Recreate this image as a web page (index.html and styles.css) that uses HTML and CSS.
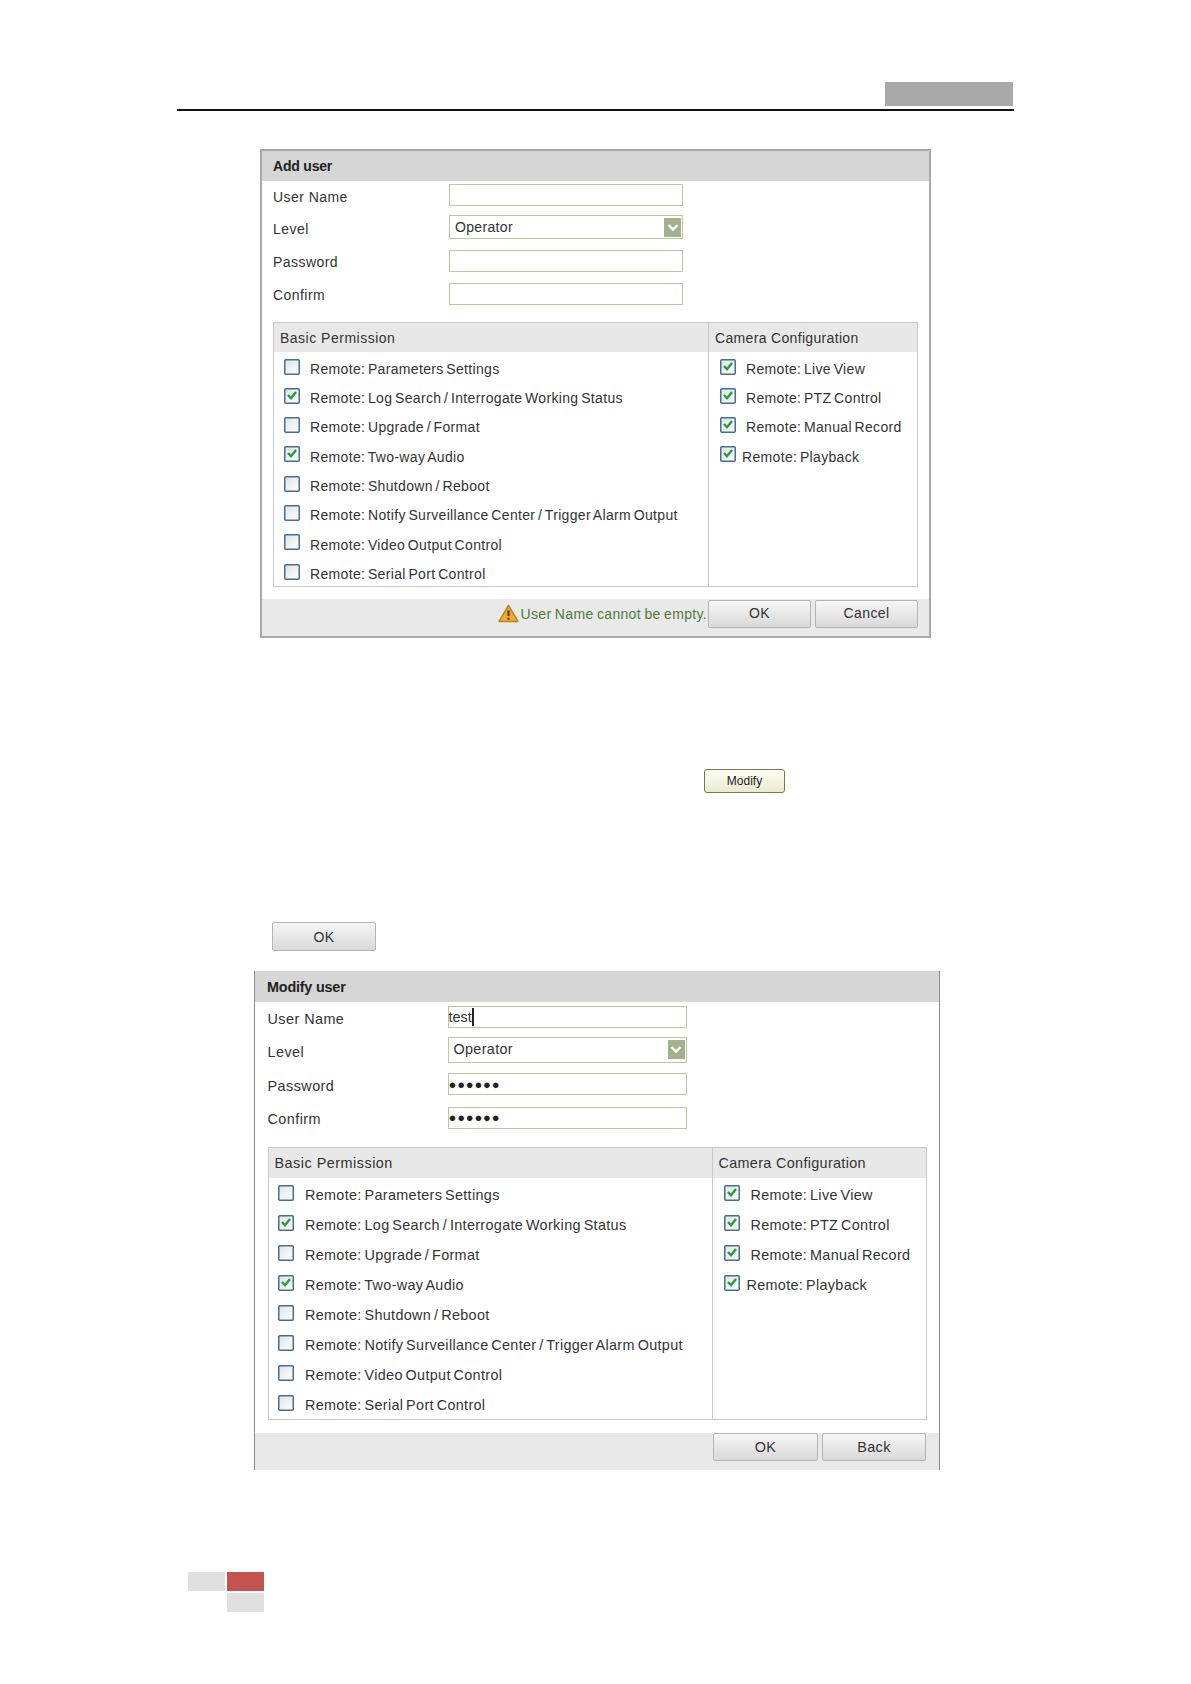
FILE: index.html
```html
<!DOCTYPE html>
<html lang="en">
<head>
<meta charset="utf-8">
<title>Add and modify user</title>
<link rel="stylesheet" href="styles.css">
</head>
<body>
<svg class="defs" width="0" height="0" aria-hidden="true">
  <defs>
    <linearGradient id="boxfill" x1="0" y1="0" x2="1" y2="1">
      <stop offset="0" stop-color="#dfe3e6"/>
      <stop offset="1" stop-color="#ffffff"/>
    </linearGradient>
    <symbol id="cb-off" viewBox="0 0 16 16">
      <rect x="0.75" y="0.75" width="14.5" height="14.5" rx="1" fill="url(#boxfill)" stroke="#44708f" stroke-width="1.5"/>
    </symbol>
    <symbol id="cb-on" viewBox="0 0 16 16">
      <rect x="0.75" y="0.75" width="14.5" height="14.5" rx="1" fill="url(#boxfill)" stroke="#44708f" stroke-width="1.5"/>
      <path d="M4 7 L7 10.2 L12 4" fill="none" stroke="#22a033" stroke-width="2.4"/>
    </symbol>
  </defs>
</svg>

<div class="page">
  <header class="page-head">
    <div class="head-tab"></div>
    <div class="head-rule"></div>
  </header>

  <section class="dialog dialog-add">
    <h2 class="dialog-title">Add user</h2>
    <div class="form">
      <div class="form-row"><span class="form-label">User Name</span><div class="field"></div></div>
      <div class="form-row"><span class="form-label">Level</span><div class="field field-select"><span>Operator</span><span class="select-arrow"><svg viewBox="0 0 16 16" width="16" height="16"><path d="M3.5 6 L8 10.5 L12.5 6" fill="none" stroke="#fff" stroke-width="2.4"/></svg></span></div></div>
      <div class="form-row"><span class="form-label">Password</span><div class="field"></div></div>
      <div class="form-row"><span class="form-label">Confirm</span><div class="field"></div></div>
    </div>
    <div class="perm">
      <div class="perm-col perm-basic">
        <div class="perm-head">Basic Permission</div>
        <ul class="perm-list">
          <li><svg class="cb"><use href="#cb-off"/></svg><span>Remote: Parameters Settings</span></li>
          <li><svg class="cb"><use href="#cb-on"/></svg><span>Remote: Log Search / Interrogate Working Status</span></li>
          <li><svg class="cb"><use href="#cb-off"/></svg><span>Remote: Upgrade / Format</span></li>
          <li><svg class="cb"><use href="#cb-on"/></svg><span>Remote: Two-way Audio</span></li>
          <li><svg class="cb"><use href="#cb-off"/></svg><span>Remote: Shutdown / Reboot</span></li>
          <li><svg class="cb"><use href="#cb-off"/></svg><span>Remote: Notify Surveillance Center / Trigger Alarm Output</span></li>
          <li><svg class="cb"><use href="#cb-off"/></svg><span>Remote: Video Output Control</span></li>
          <li><svg class="cb"><use href="#cb-off"/></svg><span>Remote: Serial Port Control</span></li>
        </ul>
      </div>
      <div class="perm-col perm-camera">
        <div class="perm-head">Camera Configuration</div>
        <ul class="perm-list">
          <li><svg class="cb"><use href="#cb-on"/></svg><span>Remote: Live View</span></li>
          <li><svg class="cb"><use href="#cb-on"/></svg><span>Remote: PTZ Control</span></li>
          <li><svg class="cb"><use href="#cb-on"/></svg><span>Remote: Manual Record</span></li>
          <li class="tight"><svg class="cb"><use href="#cb-on"/></svg><span>Remote: Playback</span></li>
        </ul>
      </div>
    </div>
    <div class="dialog-foot">
      <div class="foot-msg">
        <svg class="warn" viewBox="0 0 20 18" width="21" height="19"><path d="M10 1.2 L19 16.6 H1 Z" fill="#f2ab2c" stroke="#b98420" stroke-width="1.4" stroke-linejoin="round"/><path d="M10 6 V11.5" stroke="#5a3c08" stroke-width="2"/><path d="M10 13 V15" stroke="#5a3c08" stroke-width="2"/></svg>
        <span>User Name cannot be empty.</span>
      </div>
      <button class="btn btn-foot" type="button">OK</button>
      <button class="btn btn-foot" type="button">Cancel</button>
    </div>
  </section>

  <div class="modify-line"><button class="btn-modify" type="button">Modify</button></div>
  <div class="ok-line"><button class="btn btn-solo" type="button">OK</button></div>

  <section class="dialog dialog-modify">
    <h2 class="dialog-title">Modify user</h2>
    <div class="form">
      <div class="form-row"><span class="form-label">User Name</span><div class="field field-text"><span class="typed">test</span></div></div>
      <div class="form-row"><span class="form-label">Level</span><div class="field field-select"><span>Operator</span><span class="select-arrow"><svg viewBox="0 0 16 16" width="16" height="16"><path d="M3.5 6 L8 10.5 L12.5 6" fill="none" stroke="#fff" stroke-width="2.4"/></svg></span></div></div>
      <div class="form-row"><span class="form-label">Password</span><div class="field field-text"><span class="dots">●●●●●●</span></div></div>
      <div class="form-row"><span class="form-label">Confirm</span><div class="field field-text"><span class="dots">●●●●●●</span></div></div>
    </div>
    <div class="perm">
      <div class="perm-col perm-basic">
        <div class="perm-head">Basic Permission</div>
        <ul class="perm-list">
          <li><svg class="cb"><use href="#cb-off"/></svg><span>Remote: Parameters Settings</span></li>
          <li><svg class="cb"><use href="#cb-on"/></svg><span>Remote: Log Search / Interrogate Working Status</span></li>
          <li><svg class="cb"><use href="#cb-off"/></svg><span>Remote: Upgrade / Format</span></li>
          <li><svg class="cb"><use href="#cb-on"/></svg><span>Remote: Two-way Audio</span></li>
          <li><svg class="cb"><use href="#cb-off"/></svg><span>Remote: Shutdown / Reboot</span></li>
          <li><svg class="cb"><use href="#cb-off"/></svg><span>Remote: Notify Surveillance Center / Trigger Alarm Output</span></li>
          <li><svg class="cb"><use href="#cb-off"/></svg><span>Remote: Video Output Control</span></li>
          <li><svg class="cb"><use href="#cb-off"/></svg><span>Remote: Serial Port Control</span></li>
        </ul>
      </div>
      <div class="perm-col perm-camera">
        <div class="perm-head">Camera Configuration</div>
        <ul class="perm-list">
          <li><svg class="cb"><use href="#cb-on"/></svg><span>Remote: Live View</span></li>
          <li><svg class="cb"><use href="#cb-on"/></svg><span>Remote: PTZ Control</span></li>
          <li><svg class="cb"><use href="#cb-on"/></svg><span>Remote: Manual Record</span></li>
          <li class="tight"><svg class="cb"><use href="#cb-on"/></svg><span>Remote: Playback</span></li>
        </ul>
      </div>
    </div>
    <div class="dialog-foot">
      <button class="btn btn-foot" type="button">OK</button>
      <button class="btn btn-foot" type="button">Back</button>
    </div>
  </section>

  <footer class="page-foot">
    <div class="sq sq-grey"></div>
    <div class="sq sq-red"></div>
    <div class="sq sq-empty"></div>
    <div class="sq sq-grey"></div>
  </footer>
</div>
</body>
</html>
```

FILE: styles.css
```css
* { box-sizing: border-box; }
html, body { margin: 0; padding: 0; background: #fff; }
body { font-family: "Liberation Sans", Arial, sans-serif; color: #333; }
.defs { position: absolute; }
.page { width: 1191px; height: 1684px; padding-top: 82px; overflow: hidden; }

.page-head { width: 837px; margin-left: 177px; display: flex; flex-direction: column; align-items: flex-end; }
.head-tab { width: 128px; height: 24px; margin-right: 1px; background: #a9a9a9; }
.head-rule { width: 100%; height: 2px; margin-top: 3px; background: #111; }

.dialog { display: flex; flex-direction: column; background: #fff; letter-spacing: 0.33px; word-spacing: -1.5px; }
.dialog-add {
  --fs: 14px; --pitch: 29.3px; --check-x: 10px; --label-x: 36px; --cam-check: 11px; --cam-label: 37px; --cam-tight: 33px;
  width: 671px; height: 489px; margin-left: 260px; margin-top: 38px;
  border: 2px solid #a8a8a8; font-size: 14px;
}
.dialog-modify {
  --fs: 14.4px; --pitch: 30px; --check-x: 9.5px; --label-x: 36.5px; --cam-check: 11px; --cam-label: 38px; --cam-tight: 34px;
  width: 686px; height: 499px; margin-left: 254px; margin-top: 20px;
  border-left: 1px solid #8a8a8a; border-right: 1px solid #8a8a8a; font-size: 14.4px;
}

.dialog-title { margin: 0; height: 30px; display: flex; align-items: center; background: #d6d6d6; color: #222; font-size: var(--fs); font-weight: 700; letter-spacing: -0.2px; word-spacing: 0; }
.dialog-add .dialog-title { padding-left: 11px; }
.dialog-modify .dialog-title { height: 31px; padding-left: 12px; }

.form { display: flex; flex-direction: column; }
.dialog-add .form { padding: 1px 0 0 11px; gap: 9px; }
.dialog-modify .form { padding: 2px 0 0 12.5px; gap: 7.5px; }
.form-row { display: flex; align-items: center; height: 24px; word-spacing: 0; }
.dialog-modify .form-row { height: 26px; }
.form-label { padding-top: 3px; letter-spacing: 0.45px; }
.form-row:first-child .form-label { padding-top: 5px; }
.dialog-add .form-label { width: 176px; }
.dialog-modify .form-label { width: 180px; padding-top: 2px; }
.dialog-modify .form-row:first-child .form-label { padding-top: 4px; }
.dialog-modify .form-row:nth-child(3) .form-label { padding-top: 4px; }

.field { height: 22px; margin-top: 2px; background: #fff; border: 1.5px solid #bcc79a; display: flex; align-items: center; color: #333; }
.dialog-add .field { width: 234px; }
.dialog-modify .field { width: 239px; margin-top: 0; }
.field-select { height: 24px; margin-top: 0; justify-content: space-between; padding-left: 5px; padding-right: 1px; }
.dialog-modify .field-select { height: 26px; margin-top: -2px; padding-bottom: 1px; }
.select-arrow { width: 17px; height: 19px; background: #a3b18d; display: flex; align-items: center; justify-content: center; }
.field-text { padding-left: 0; }
.typed { border-right: 2px solid #222; line-height: 18px; height: 18px; letter-spacing: 0; }
.dots { font-size: 13px; letter-spacing: 0.8px; color: #222; }

.perm { display: flex; border: 1.5px solid #c8c8c8; }
.dialog-add .perm { width: 645px; height: 265px; margin: 17px 0 0 11px; }
.dialog-modify .perm { width: 659.5px; height: 273px; margin: 16px 0 0 12.5px; }
.perm-col { display: flex; flex-direction: column; }
.dialog-add .perm-basic { width: 434px; }
.dialog-modify .perm-basic { width: 443px; }
.perm-camera { flex: 1; border-left: 1.5px solid #c8c8c8; }
.perm-head { height: 29px; display: flex; align-items: center; padding-left: 6px; background: #e8e8e8; flex: none; letter-spacing: 0.5px; word-spacing: 0; }
.perm-camera .perm-head { letter-spacing: 0.33px; }
.dialog-modify .perm-head { height: 30px; }
.perm-list { list-style: none; margin: 0; padding: 0.6px 0 0; }
.dialog-modify .perm-list { padding-top: 1px; }
.perm-list li { position: relative; height: var(--pitch); display: flex; align-items: center; padding-left: var(--label-x); padding-top: 3px; white-space: nowrap; }
.perm-camera li { padding-left: var(--cam-label); }
.perm-camera li.tight { padding-left: var(--cam-tight); }
.cb { position: absolute; left: var(--check-x); top: 6px; width: 16px; height: 16px; }
.perm-camera .cb { left: var(--cam-check); }

.dialog-foot { flex: 1; display: flex; justify-content: flex-end; align-items: flex-start; background: #e9e9e9; }
.dialog-add .dialog-foot { margin-top: 12px; padding: 1px 11px 0 0; gap: 4px; }
.dialog-modify .dialog-foot { margin-top: 13px; padding: 0 13px 0 0; gap: 4px; }
.foot-msg { display: flex; align-items: center; height: 27px; gap: 2px; color: #4f7a3a; margin-right: -3px; word-spacing: -0.8px; }

.btn { font-family: inherit; color: #333; background: linear-gradient(#f6f6f6, #d9d9d9); border: 1px solid #b4b4b4; border-radius: 2px; padding: 0; letter-spacing: 0.4px; }
.btn-foot { height: 28px; width: 103px; font-size: var(--fs); }
.dialog-add .btn-foot { padding-bottom: 2px; }
.dialog-modify .btn-foot { width: 105px; }
.dialog-modify .btn-foot + .btn-foot { width: 104px; }
.btn-solo { width: 104px; height: 29px; font-size: 14px; }
.modify-line { margin: 131px 0 0 704px; height: 24px; }
.ok-line { margin: 129px 0 0 272px; height: 29px; }
.btn-modify { width: 81px; height: 24px; padding: 0; font-family: inherit; font-size: 12px; color: #222; background: linear-gradient(#fffef4, #ece9cf); border: 1.5px solid #6d7d4c; border-radius: 3px; }

.page-foot { margin: 102px 0 0 188px; display: grid; grid-template-columns: 37px 37px; grid-template-rows: 19px 19px; gap: 2px; width: 76px; }
.sq-grey { background: #e0e0e0; }
.sq-red { background: #c4524f; }
.sq-empty { background: transparent; }
```
